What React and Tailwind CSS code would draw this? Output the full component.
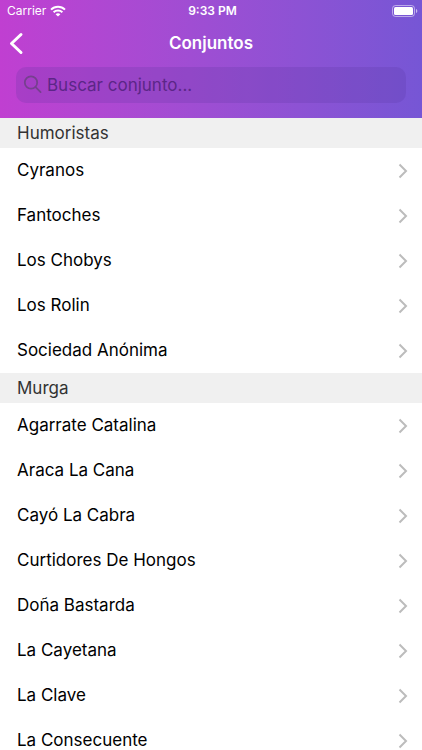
const sections = [
  {
    title: 'Humoristas',
    items: ['Cyranos', 'Fantoches', 'Los Chobys', 'Los Rolin', 'Sociedad Anónima'],
  },
  {
    title: 'Murga',
    items: [
      'Agarrate Catalina',
      'Araca La Cana',
      'Cayó La Cabra',
      'Curtidores De Hongos',
      'Doña Bastarda',
      'La Cayetana',
      'La Clave',
      'La Consecuente',
    ],
  },
];

const WifiIcon = () => (
  <svg width="16" height="12" viewBox="0 0 16 12" fill="none" stroke="white" strokeWidth="2">
    <path d="M1 4.6C4.9 .8 11.1 .8 15 4.6" />
    <path d="M3.6 7.3c2.5-2.3 6.3-2.3 8.8 0" />
    <path d="M8 11.6 5.6 9.2c1.4-1.2 3.4-1.2 4.8 0z" fill="white" stroke="none" />
  </svg>
);

const BatteryIcon = () => (
  <svg width="26" height="12" viewBox="0 0 26 12" fill="none">
    <rect x="0.5" y="0.5" width="22" height="11" rx="3" stroke="white" strokeOpacity="0.5" />
    <rect x="2" y="2" width="19" height="8" rx="1.5" fill="white" />
    <path d="M24 4v4c.8-.3 1.3-1.1 1.3-2S24.8 4.3 24 4z" fill="white" fillOpacity="0.6" />
  </svg>
);

const StatusBar = () => (
  <div className="grid grid-cols-3 items-center h-[22px] pl-[7px] pr-1 text-xs text-white">
    <div className="flex items-center gap-1">
      <span>Carrier</span>
      <WifiIcon />
    </div>
    <span className="text-center font-semibold">9:33 PM</span>
    <div className="flex justify-end">
      <BatteryIcon />
    </div>
  </div>
);

const NavBar = () => (
  <div className="grid grid-cols-[1fr_auto_1fr] items-center h-11 px-2">
    <button type="button" aria-label="Atrás" className="justify-self-start">
      <svg width="16" height="24" viewBox="0 0 16 24" fill="none" stroke="white" strokeWidth="3" strokeLinecap="round" strokeLinejoin="round">
        <path d="M13 2.5 3.5 11.500 13 20.500" />
      </svg>
    </button>
    <h1 className="text-[17px] font-semibold text-white">Conjuntos</h1>
  </div>
);

const SearchBar = () => (
  <label className="flex items-center gap-1 h-9 mx-4 mt-px pl-[7px] pr-3 rounded-[10px] bg-[#54309a]/20">
    <svg width="20" height="20" viewBox="0 0 20 20" fill="none" stroke="#76408f" strokeWidth="1.8" strokeLinecap="round">
      <circle cx="8" cy="7.500" r="6.200" />
      <path d="m12.600 12.100 5 5" />
    </svg>
    <input
      type="text"
      aria-label="Buscar conjunto"
      placeholder="Buscar conjunto..."
      className="flex-1 min-w-0 pt-0.5 bg-transparent text-[17px] text-[#4b1f78] placeholder:text-[#5c2687] outline-none"
    />
  </label>
);

const ConjuntoRow = ({ name }) => (
  <li>
    <button type="button" className="flex items-center justify-between w-full h-[45px] pl-[17px] pr-[14px] text-left text-[17px] text-black">
      <span>{name}</span>
      <svg width="10" height="16" viewBox="0 0 10 16" fill="none" stroke="#bcbcbc" strokeWidth="2">
        <path d="m1.500 1.500 6.500 6.500-6.500 6.500" />
      </svg>
    </button>
  </li>
);

export default function App() {
  return (
    <div className="flex flex-col h-screen bg-white font-[Inter,sans-serif]">
      <header className="shrink-0 pb-[15px] bg-linear-to-r from-[#c03fd1] to-[#7656d5]">
        <StatusBar />
        <NavBar />
        <SearchBar />
      </header>

      <main className="flex-1 min-h-0 overflow-y-auto [scrollbar-width:none]">
        {sections.map((section) => (
          <section key={section.title}>
            <h2 className="flex items-center h-[30px] pt-0.5 pl-[17px] bg-[#f0f0f0] text-[17px] text-[#333333]">
              {section.title}
            </h2>
            <ul>
              {section.items.map((name) => (
                <ConjuntoRow key={name} name={name} />
              ))}
            </ul>
          </section>
        ))}
      </main>
    </div>
  );
}
